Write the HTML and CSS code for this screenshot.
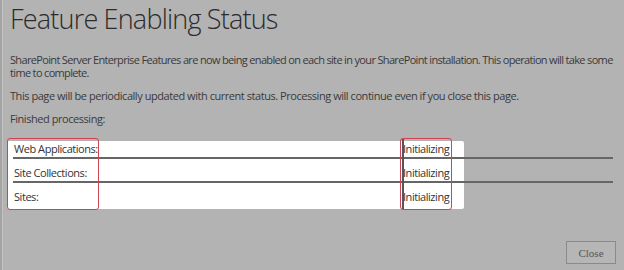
FILE: index.html
```html
<!DOCTYPE html>
<html>
<head>
<meta charset="utf-8">
<link rel="stylesheet" href="styles.css">
</head>
<body>
<div class="dialog">
  <h1 class="title">Feature Enabling Status</h1>
  <p class="text text-lead">SharePoint Server Enterprise Features are now being enabled on each site in your SharePoint installation. This operation will take some time to complete.</p>
  <p class="text">This page will be periodically updated with current status. Processing will continue even if you close this page.</p>
  <p class="text">Finished processing:</p>
  <div class="results">
    <div class="panel">
      <div class="row row-first"><span class="label">Web Applications:</span><span class="value">Initializing</span></div>
      <div class="row"><span class="label">Site Collections:</span><span class="value">Initializing</span></div>
      <div class="row row-last"><span class="label">Sites:</span><span class="value">Initializing</span></div>
    </div>
    <div class="mark mark-left"></div>
    <div class="mark mark-right"></div>
  </div>
  <div class="footer">
    <button class="btn">Close</button>
  </div>
</div>
</body>
</html>
```
FILE: styles.css
```css
html, body {
  margin: 0;
  padding: 0;
  background: #b3b3b3;
}
.dialog {
  height: 270px;
  box-sizing: border-box;
  display: flex;
  flex-direction: column;
  padding: 0 0 6px 10px;
  border-left: 2px solid #a4a4a4;
  box-shadow: inset 1px 0 0 #c2c2c2;
  font-family: "Open Sans", "Noto Sans", sans-serif;
  color: #3a3a3a;
  overflow: hidden;
}
.title {
  margin: 2px 0 0 -2px;
  font-family: "Open Sans", sans-serif;
  font-weight: 300;
  font-size: 27px;
  line-height: 34px;
  color: #2b2b2b;
  letter-spacing: -0.8px;
}
.text {
  margin: 17px 0 0 -2px;
  font-size: 11px;
  line-height: 13px;
  letter-spacing: -0.45px;
  width: 612px;
}
.text-lead {
  letter-spacing: -0.66px;
}
.text + .text {
  margin-top: 10px;
}
.results {
  position: relative;
  margin: 16px 0 0 -5px;
  width: 606px;
}
.panel {
  width: 457px;
  box-sizing: border-box;
  padding: 0 0 4px 6px;
  background: #fff;
  border-radius: 2px;
}
.row {
  width: 600px;
  height: 22px;
  display: flex;
  align-items: flex-end;
  border-bottom: 2px solid #666;
  font-size: 11px;
  line-height: 14px;
  letter-spacing: -0.45px;
}
.row-first { height: 16px; }
.row-last { border-bottom: 0; }
.row span { padding-bottom: 1px; }
.label {
  width: 389px;
  padding-left: 1px;
  color: #333;
}
.value {
  color: #333;
}
.mark {
  position: absolute;
  top: -3px;
  height: 72px;
  box-sizing: border-box;
  border: 1.5px solid #cf4452;
  border-radius: 3px;
}
.mark-left {
  left: 0;
  width: 92px;
}
.mark-right {
  left: 393px;
  width: 52px;
}
.mark-right::before {
  content: "";
  position: absolute;
  left: 1px;
  top: 0;
  bottom: 0;
  width: 2px;
  background: #555;
}
.footer {
  margin-top: auto;
  display: flex;
  justify-content: flex-end;
  padding-right: 8px;
}
.btn {
  width: 50px;
  height: 23px;
  border: 1px solid #8a8a8a;
  background: #b6b6b6;
  color: #555;
  font-family: "Liberation Serif", serif;
  font-size: 11px;
  padding: 0;
}
```
